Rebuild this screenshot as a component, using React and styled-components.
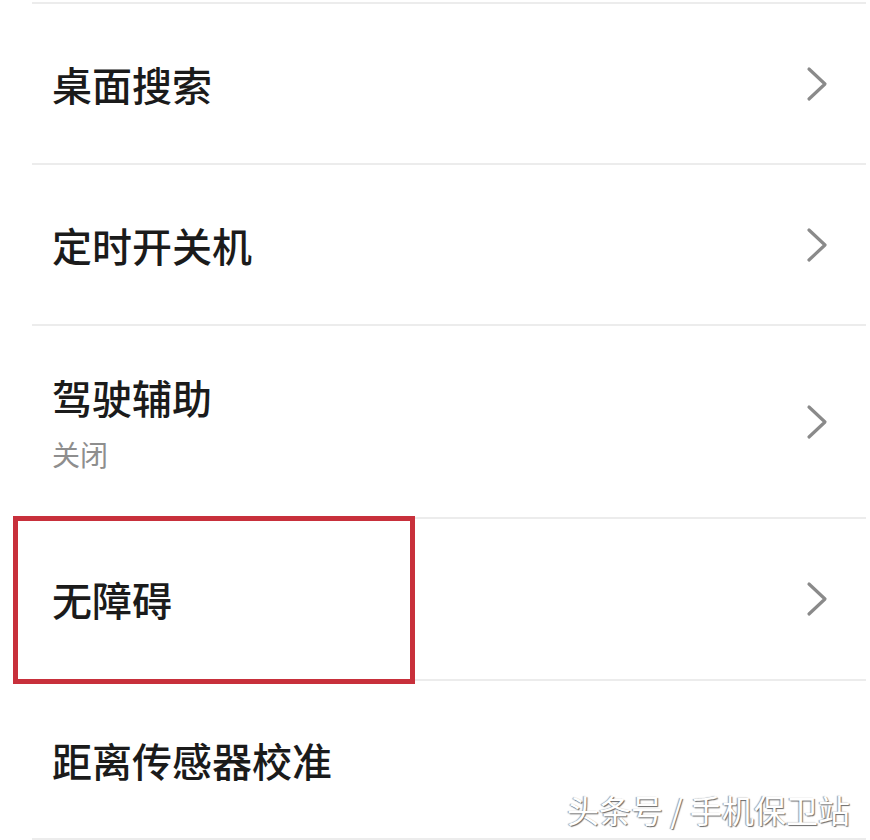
import React from "react";
import styled, { createGlobalStyle } from "styled-components";

const GlobalStyle = createGlobalStyle`
  html, body {
    margin: 0;
    padding: 0;
    background: #fff;
  }
  body {
    font-family: "Noto Sans CJK SC", "Noto Sans", sans-serif;
  }
`;

const items = [
  { title: "桌面搜索", height: 159, arrow: true },
  { title: "定时开关机", height: 159, arrow: true },
  { title: "驾驶辅助", sub: "关闭", height: 191, arrow: true },
  { title: "无障碍", height: 160, arrow: true, marked: true },
  { title: "距离传感器校准", height: 157 },
];

function Chevron() {
  return (
    <svg width="26" height="36" viewBox="0 0 26 36">
      <path
        d="M5 3 L21 18 L5 33"
        fill="none"
        stroke="#8a8a8a"
        strokeWidth="3.2"
        strokeLinecap="round"
        strokeLinejoin="round"
      />
    </svg>
  );
}

function App() {
  return (
    <Page>
      <GlobalStyle />
      <List>
        {items.map((item) => (
          <Row key={item.title} $h={item.height}>
            <Texts>
              <Title>{item.title}</Title>
              {item.sub && <Sub>{item.sub}</Sub>}
            </Texts>
            {item.arrow && <Chevron />}
            {item.marked && <Highlight />}
          </Row>
        ))}
      </List>
      <Watermark>头条号 / 手机保卫站</Watermark>
    </Page>
  );
}

export default App;

const Page = styled.div`
  position: relative;
  width: 870px;
  height: 840px;
  overflow: hidden;
  background: #fff;
  padding-top: 2px;
  box-sizing: border-box;
`;

const List = styled.div`
  display: flex;
  flex-direction: column;
  border-bottom: 2px solid #ececec;
  margin-left: 32px;
  margin-right: 4px;
`;

const Row = styled.div`
  position: relative;
  height: ${(p) => p.$h}px;
  border-top: 2px solid #ececec;
  display: flex;
  align-items: center;
  justify-content: space-between;
  padding: 0 36px 0 20px;
`;

const Texts = styled.div`
  display: flex;
  flex-direction: column;
  gap: 20px;
`;

const Title = styled.div`
  font-size: 40px;
  line-height: 44px;
  font-weight: 500;
  color: #1b1b1b;
  letter-spacing: 0;
`;

const Sub = styled.div`
  font-size: 28px;
  line-height: 30px;
  color: #8e8e8e;
`;

const Highlight = styled.div`
  position: absolute;
  z-index: 2;
  left: -19px;
  top: -3px;
  width: 402px;
  height: 168px;
  box-sizing: border-box;
  border: 5px solid #c8303b;
  pointer-events: none;
`;

const Watermark = styled.div`
  position: absolute;
  z-index: 3;
  right: 20px;
  bottom: 8px;
  font-size: 32px;
  color: #fff;
  text-shadow: 1px 1px 1px #6a6a6a, -1px 0 1px #9a9a9a;
  white-space: pre;
`;
